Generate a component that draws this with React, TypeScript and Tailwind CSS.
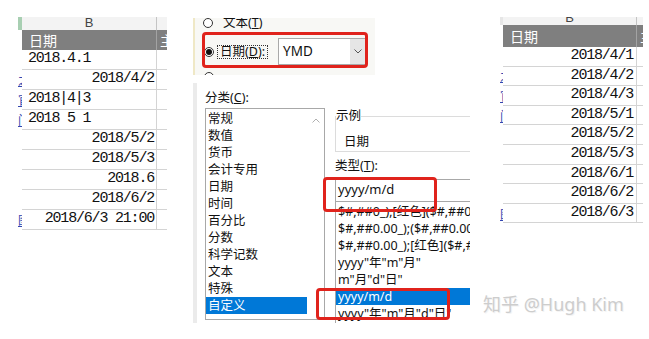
import React from 'react';

type Row = { text: string; right?: boolean; mark?: string };

const LEFT_ROWS: Row[] = [
  { text: '2018.4.1' },
  { text: '2018/4/2', right: true, mark: '之' },
  { text: '2018|4|3', mark: '官' },
  { text: '2018 5 1', mark: '门' },
  { text: '2018/5/2', right: true },
  { text: '2018/5/3', right: true },
  { text: '2018.6', right: true },
  { text: '2018/6/2', right: true },
  { text: '2018/6/3 21:00', right: true, mark: '图' },
];

const RIGHT_ROWS: Row[] = [
  { text: '2018/4/1', right: true },
  { text: '2018/4/2', right: true, mark: '之' },
  { text: '2018/4/3', right: true, mark: '官' },
  { text: '2018/5/1', right: true, mark: '门' },
  { text: '2018/5/2', right: true },
  { text: '2018/5/3', right: true },
  { text: '2018/6/1', right: true },
  { text: '2018/6/2', right: true },
  { text: '2018/6/3', right: true, mark: '图' },
];

const CATEGORIES = ['常规', '数值', '货币', '会计专用', '日期', '时间', '百分比', '分数', '科学记数', '文本', '特殊', '自定义'];

const FORMATS = [
  '$#,##0_);[红色]($#,##0',
  '$#,##0.00_);($#,##0.00)',
  '$#,##0.00_);[红色]($#,##0.00)',
  'yyyy"年"m"月"',
  'm"月"d"日"',
  'yyyy/m/d',
  'yyyy"年"m"月"d"日"',
];

type SheetProps = {
  rows: Row[];
  topH: string;
  headH: string;
  rowH: string;
  markW: string;
  mainW: string;
  tailW: string;
  padR: string;
  markBg: string;
};

function Sheet({ rows, topH, headH, rowH, markW, mainW, tailW, padR, markBg }: SheetProps) {
  return (
    <div className="flex flex-col">
      <div className={`flex ${topH}`}>
        <div className={`${markW} ${markBg}`} />
        <div className={`${mainW} flex items-end justify-center overflow-hidden border-r border-[#c4c4c4] bg-[#f3f3f3] text-[13px] leading-[14px] text-[#444] [font-family:'Liberation_Sans',sans-serif]`}>
          B
        </div>
        <div className={`${tailW} bg-[#f3f3f3]`} />
      </div>
      <div className={`flex ${headH}`}>
        <div className={markW} />
        <div className={`${mainW} flex items-center border-r border-[#a3a3a3] bg-[#7f7f7f] pl-[7px] text-[14px] text-white [font-family:'Noto_Sans_CJK_SC',sans-serif]`}>
          日期
        </div>
        <div className={`${tailW} flex items-center overflow-hidden bg-[#7f7f7f] pl-[3px] text-[14px] text-white [font-family:'Noto_Sans_CJK_SC',sans-serif]`}>
          主
        </div>
      </div>
      {rows.map((r, i) => (
        <div key={i} className={`flex ${rowH}`}>
          <div className={`${markW} flex items-center justify-start overflow-hidden text-[12px] text-[#3447b0] underline [font-family:'Noto_Sans_CJK_SC',sans-serif]`}>
            {r.mark}
          </div>
          <div
            className={`${mainW} flex items-center whitespace-pre border-b border-r border-[#d4d4d4] text-[15px] tracking-[-1.2px] text-[#111] [font-family:'Liberation_Mono',monospace] ${
              r.right ? `justify-end ${padR}` : 'justify-start pl-[6px]'
            }`}
          >
            {r.text}
          </div>
          <div className={`${tailW} border-b border-[#d4d4d4]`} />
        </div>
      ))}
    </div>
  );
}

function Radio({ checked }: { checked?: boolean }) {
  return (
    <span className="flex h-[10px] w-[10px] shrink-0 items-center justify-center rounded-full border border-[#333] bg-white">
      {checked && <span className="h-[6px] w-[6px] rounded-full bg-[#111]" />}
    </span>
  );
}

function RedBox({ className }: { className: string }) {
  return <div className={`pointer-events-none absolute rounded-[4px] border-[3px] border-[#e0231c] ${className}`} />;
}

function ImportSnippet() {
  return (
    <div className="relative mt-[18px] h-[57px] w-[182px] overflow-hidden border-l-2 border-[#efe8c6] bg-[#f8f8f5] text-[12.5px] text-[#111] [font-family:'Noto_Sans','Noto_Sans_CJK_SC',sans-serif]">
      <div className="-mt-[3px] flex h-[16px] items-center gap-[10px] pl-[8px]">
        <Radio />
        <span>
          文本(<span className="underline">T</span>)
        </span>
      </div>
      <div className="mt-[7px] flex h-[27px] items-center pl-[9px]">
        <Radio checked />
        <span className="ml-[3px] border border-dotted border-[#333] px-[2px] leading-[12px]">
          日期(<span className="underline">D</span>):
        </span>
        <div className="ml-[10px] flex h-[27px] w-[89px] items-stretch border border-[#a9a9a9] bg-white">
          <span className="flex flex-1 items-center pl-[4px] text-[13.5px]">YMD</span>
          <span className="flex w-[16px] items-center justify-center bg-[#e6e6e6]">
            <svg width="8" height="5" viewBox="0 0 8 5" fill="none">
              <path d="M0.5 0.5 L4 4 L7.5 0.5" stroke="#555" strokeWidth="1" />
            </svg>
          </span>
        </div>
      </div>
      <div className="mt-[7px] pl-[9px]">
        <Radio />
      </div>
      <RedBox className="left-[7px] top-[14px] h-[36px] w-[166px]" />
    </div>
  );
}

function FormatDialog() {
  return (
    <div className="relative mt-[8px] flex h-[240px] w-[277px] overflow-hidden border-l-4 border-[#ebebeb] bg-white pl-[8px] text-[12.5px] text-[#111] [font-family:'Noto_Sans','Noto_Sans_CJK_SC',sans-serif]">
      <div className="flex w-[120px] shrink-0 flex-col pt-[5px]">
        <div className="h-[20px] leading-[20px]">
          分类(<span className="underline">C</span>):
        </div>
        <div className="flex h-[212px] border border-[#a8a8a8]">
          <div className="flex-1 pt-[1px]">
            {CATEGORIES.map((c) => (
              <div
                key={c}
                className={`h-[17px] pl-[2px] leading-[17px] ${c === '自定义' ? 'bg-[#0078d7] text-white' : ''}`}
              >
                {c}
              </div>
            ))}
          </div>
          <div className="flex w-[17px] justify-center pt-[9px]">
            <svg width="8" height="5" viewBox="0 0 8 5" fill="none">
              <path d="M0.5 4.5 L4 1 L7.5 4.5" stroke="#b0b0b0" strokeWidth="1" />
            </svg>
          </div>
        </div>
      </div>
      <div className="ml-[10px] flex w-[150px] shrink-0 flex-col">
        <fieldset className="mt-[27px] h-[48px] border border-[#dcdcdc]">
          <legend className="text-[12.5px] leading-[12px]">示例</legend>
          <div className="mt-[11px] ml-[8px] leading-[17px]">日期</div>
        </fieldset>
        <div className="mt-[5px] h-[17px] leading-[17px]">
          类型(<span className="underline">T</span>):
        </div>
        <div className="mt-[5px] flex h-[26px] items-center border border-[#a8a8a8] bg-white pl-[2px] text-[13px]">
          yyyy/m/d
        </div>
        <div className="h-[140px] border-x border-[#a8a8a8] pt-[1px]">
          {FORMATS.map((f) => (
            <div
              key={f}
              className={`h-[17px] whitespace-nowrap pl-[2px] leading-[17px] ${f === 'yyyy/m/d' ? 'bg-[#0078d7] text-white' : ''}`}
            >
              {f}
            </div>
          ))}
        </div>
      </div>
      <RedBox className="left-[126px] top-[94px] h-[35px] w-[114px]" />
      <RedBox className="left-[119px] top-[205px] h-[32px] w-[134px]" />
    </div>
  );
}

export default function App() {
  return (
    <div className="relative flex h-[339px] w-[649px] items-start overflow-hidden bg-white">
      <div className="ml-[18px] mt-[17px]">
        <Sheet
          rows={LEFT_ROWS}
          topH="h-[13px]"
          headH="h-[20px]"
          rowH="h-[20px]"
          markW="w-[4px]"
          mainW="w-[135px]"
          tailW="w-[10px]"
          padR="pr-[2px]"
          markBg="bg-[#a8cfb2]"
        />
      </div>
      <div className="ml-[26px] flex flex-col">
        <ImportSnippet />
        <FormatDialog />
      </div>
      <div className="ml-[30px] mt-[17px]">
        <Sheet
          rows={RIGHT_ROWS}
          topH="h-[8px]"
          headH="h-[22px]"
          rowH="h-[19.6px]"
          markW="w-[3px]"
          mainW="w-[134px]"
          tailW="w-[6px]"
          padR="pr-[3px]"
          markBg="bg-[#e6e6e6]"
        />
      </div>
      <div className="absolute left-[483px] top-[293px] text-[18px] leading-[22px] text-[#cdcdcd] [font-family:'Noto_Sans','Noto_Sans_CJK_SC',sans-serif] [text-shadow:1px_1px_0_#f4f4f4]">
        知乎 @Hugh Kim
      </div>
    </div>
  );
}
